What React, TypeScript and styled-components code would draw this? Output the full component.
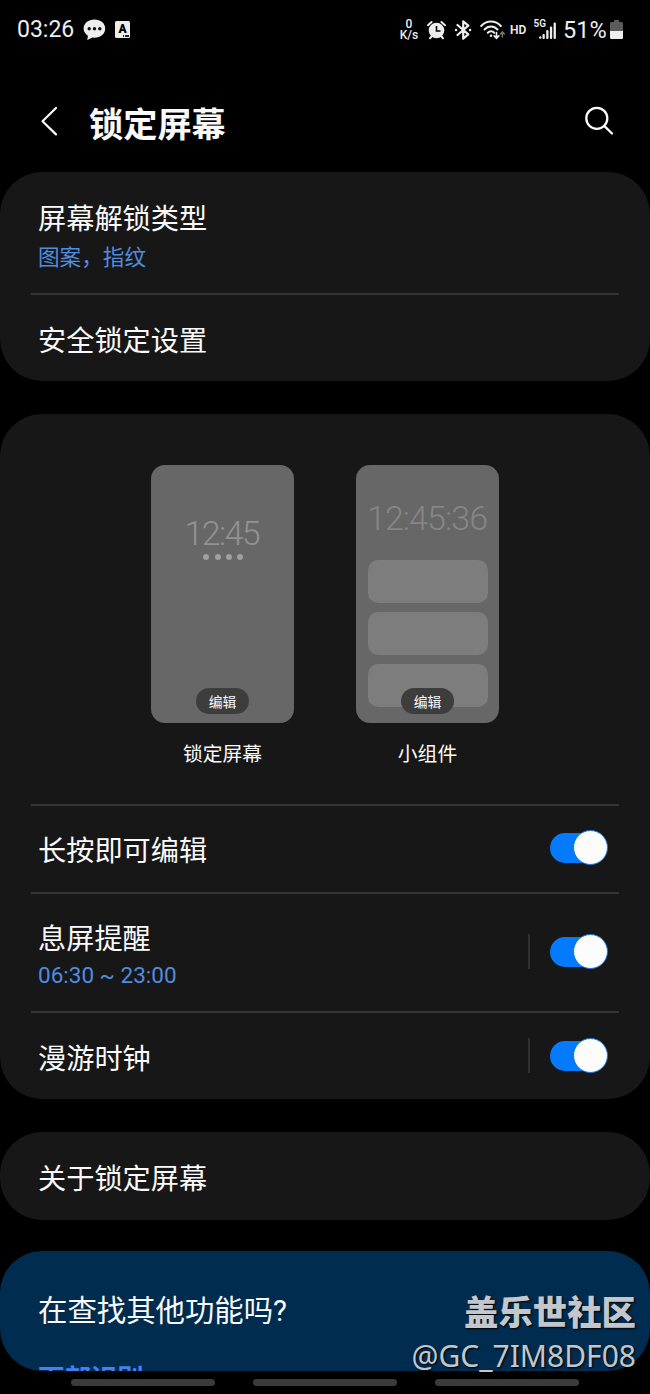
import React from "react";
import styled, { createGlobalStyle } from "styled-components";

const GlobalStyle = createGlobalStyle`
  * { box-sizing: border-box; }
  html, body { margin: 0; padding: 0; background: #000; }
  body { font-family: Roboto, "Noto Sans CJK SC", sans-serif; color: #fafafa; }
`;

const Screen = styled.div`
  position: relative;
  width: 650px;
  height: 1394px;
  overflow: hidden;
  background: #000;
  display: flex;
  flex-direction: column;
`;

const StatusBar = styled.div`
  height: 60px;
  flex: none;
  display: flex;
  justify-content: space-between;
  align-items: center;
  padding: 0 27px 0 17px;
  color: #eee;
`;

const StatusGroup = styled.div`
  display: flex;
  align-items: center;
  svg { display: block; flex: none; }
`;

const StatusText = styled.span<{ $size: number; $weight?: number; $ml?: number; $w?: number }>`
  font-size: ${(p) => p.$size}px;
  font-weight: ${(p) => p.$weight ?? 400};
  margin-left: ${(p) => p.$ml ?? 0}px;
  width: ${(p) => (p.$w ? p.$w + "px" : "auto")};
  line-height: 28px;
  white-space: nowrap;
`;

const Speed = styled.div`
  width: 20px;
  display: flex;
  flex-direction: column;
  align-items: center;
  font-size: 12px;
  line-height: 11.5px;
  font-weight: 500;
  white-space: nowrap;
`;

const IconSlot = styled.span<{ $ml: number }>`
  margin-left: ${(p) => p.$ml}px;
`;

const Header = styled.header`
  height: 112px;
  flex: none;
  display: flex;
  align-items: center;
  padding: 10px 36px 0 40px;
  svg { display: block; flex: none; }
`;

const Title = styled.h1`
  flex: 1;
  margin: 8px 0 0 30px;
  font-size: 34.2px;
  line-height: 44px;
  font-weight: 700;
`;

const Card = styled.section<{ $h: number; $gap?: number; $tone?: "blue" }>`
  flex: none;
  height: ${(p) => p.$h}px;
  margin-bottom: ${(p) => p.$gap ?? 32}px;
  border-radius: 42px;
  background: ${(p) => (p.$tone === "blue" ? "#002c4f" : "#171717")};
  overflow: hidden;
`;

const Row = styled.div<{ $h: number; $pad?: number }>`
  height: ${(p) => p.$h}px;
  padding: ${(p) => p.$pad ?? 5}px 42px 0 38px;
  display: flex;
  align-items: center;
  justify-content: space-between;
`;

const Divider = styled.hr`
  height: 2px;
  margin: 0 31px;
  border: 0;
  background: #353535;
`;

const Labels = styled.div`
  display: flex;
  flex-direction: column;
`;

const Label = styled.div<{ $size?: number }>`
  font-size: ${(p) => p.$size ?? 28.2}px;
  line-height: 38px;
  white-space: nowrap;
`;

const Sub = styled.div<{ $size: number; $lh: number }>`
  font-size: ${(p) => p.$size}px;
  line-height: ${(p) => p.$lh}px;
  color: #4f8de0;
`;

const Previews = styled.div`
  height: 390px;
  padding-top: 51px;
  display: flex;
  justify-content: center;
  gap: 62px;
`;

const Preview = styled.div`
  display: flex;
  flex-direction: column;
  align-items: center;
`;

const Phone = styled.div<{ $top: number }>`
  position: relative;
  width: 143px;
  height: 258px;
  padding-top: ${(p) => p.$top}px;
  border-radius: 14px;
  background: #676767;
  display: flex;
  flex-direction: column;
  align-items: center;
`;

const Clock = styled.div<{ $color: string; $tracking: number }>`
  font-size: 34px;
  line-height: 40px;
  font-weight: 300;
  letter-spacing: ${(p) => p.$tracking}px;
  margin-right: ${(p) => -p.$tracking}px;
  color: ${(p) => p.$color};
  white-space: nowrap;
`;

const Dots = styled.div`
  display: flex;
  gap: 5px;
  margin-top: 1px;
  i { width: 6px; height: 6px; border-radius: 50%; background: #a0a0a0; }
  i:first-child { margin-right: 1px; }
`;

const Widgets = styled.div`
  display: flex;
  flex-direction: column;
  gap: 9px;
  margin-top: 22px;
`;

const Widget = styled.div`
  width: 120px;
  height: 43px;
  border-radius: 10px;
  background: #7d7d7d;
`;

const EditPill = styled.div`
  position: absolute;
  left: 45px;
  bottom: 9px;
  width: 53px;
  height: 26px;
  border-radius: 13px;
  background: #3d3d3d;
  font-size: 13.8px;
  line-height: 28px;
  font-weight: 400;
  text-align: center;
`;

const Caption = styled.div`
  margin-top: 18px;
  font-size: 19.8px;
  line-height: 28px;
`;

const Control = styled.div`
  display: flex;
  align-items: center;
  margin-top: -9px;
`;

const Separator = styled.div`
  width: 1.5px;
  height: 35px;
  margin-right: 20.5px;
  background: #303030;
`;

const Switch = styled.div`
  width: 58px;
  height: 35px;
  display: flex;
  align-items: center;
`;

const Track = styled.div`
  width: 57px;
  height: 30px;
  border-radius: 15px;
  background: #047aff;
  display: flex;
  align-items: center;
  justify-content: flex-end;
`;

const Knob = styled.div`
  flex: none;
  width: 35px;
  height: 35px;
  margin-right: -1px;
  border: 1.5px solid #1273d8;
  border-radius: 50%;
  background: #fcfcfc;
`;

const Suggestion = styled.div`
  padding: 41px 38px 0;
`;

const Link = styled.div`
  margin-top: 31px;
  font-size: 26.4px;
  line-height: 36px;
  font-weight: 700;
  color: #3f82f0;
`;

const NavBar = styled.div`
  position: absolute;
  left: 0;
  right: 0;
  bottom: 0;
  height: 23px;
  padding: 8px 71px 0;
  background: #000;
  display: flex;
  justify-content: space-between;
`;

const NavPill = styled.div`
  width: 144px;
  height: 7px;
  border-radius: 4px;
  background: #3b3b3b;
`;

const Watermark = styled.div`
  position: absolute;
  right: 14px;
  bottom: 17px;
  display: flex;
  flex-direction: column;
  align-items: flex-end;
  color: #c3c7cb;
  text-shadow: 1px 1px 2px #000;
  white-space: nowrap;
`;

const Community = styled.div`
  font-family: "Noto Sans CJK SC", sans-serif;
  font-size: 34.4px;
  line-height: 44px;
  margin-bottom: 3px;
  font-weight: 900;
`;

const UserName = styled.div`
  font-family: "Noto Sans", sans-serif;
  font-size: 30px;
  line-height: 42px;
`;

const ChatIcon = () => (
  <svg width="23" height="23" viewBox="0 0 23 23">
    <path d="M11.500 .5C5.200.5.600 4.400.600 9.500c0 3 1.600 5.600 4.300 7.200L4.300 21l5.200-2.500 2 .2c6.100 0 10.700-4 10.700-9.200S17.600.5 11.500.5Z" fill="#eee" />
    <g fill="#111"><circle cx="6.200" cy="9.700" r="1.700" /><circle cx="11.500" cy="9.700" r="1.700" /><circle cx="16.800" cy="9.700" r="1.700" /></g>
  </svg>
);

const KeyboardBadge = styled.span`
  position: relative;
  width: 15px;
  height: 17px;
  margin: -2px 0 0 9px;
  border-radius: 1.5px;
  background: #eee;
  color: #000;
  font-size: 12px;
  line-height: 16px;
  font-weight: 900;
  text-align: center;
  &::after {
    content: "";
    position: absolute;
    right: 1px;
    bottom: 1px;
    width: 6px;
    height: 1.5px;
    background: repeating-linear-gradient(90deg, #222 0 1.5px, #eee 1.5px 2.2px);
  }
`;

const AlarmIcon = () => (
  <svg width="19" height="20" viewBox="0 0 19 20">
    <circle cx="9.500" cy="10.500" r="7.800" fill="#eee" />
    <path d="M1 5.200 4.600 2M18 5.200 14.400 2M4.500 16.500 3 18.300M14.500 16.500 16 18.300" stroke="#eee" strokeWidth="2" strokeLinecap="round" />
    <path d="M9.500 6v5h4" stroke="#000" strokeWidth="1.600" fill="none" />
  </svg>
);

const BluetoothIcon = () => (
  <svg width="18" height="20" viewBox="0 0 18 20" fill="none" stroke="#eee" strokeWidth="2.200" strokeLinecap="round" strokeLinejoin="round">
    <path d="M3.500 5 14.300 14.300 9.200 18.700V1.300L14.300 5.700 3.500 15" />
    <path d="M2 10h.1M16 10h.1" strokeWidth="2.400" />
  </svg>
);

const WifiIcon = () => (
  <svg width="25" height="20" viewBox="0 0 25 20" fill="none" stroke="#eee" strokeWidth="2" strokeLinecap="round">
    <path d="M1.200 6C6.500.1 15.500.1 20.800 6" />
    <path d="M4.500 9.500c3.500-4 9.500-4 13 0" />
    <path d="M7.800 12.700c1.800-1.800 4.600-1.800 6.400 0" />
    <circle cx="11" cy="15.700" r="1.200" fill="#eee" stroke="none" />
    <path d="M16.500 12.500v5.500m-2.300-2.200 2.300 2.400 2.300-2.400" strokeWidth="1.700" />
    <path d="M22.400 17v-5m-1.900 1.900 1.900-2 1.900 2" stroke="#777" strokeWidth="1.500" />
  </svg>
);

const SignalIcon = () => (
  <svg width="23" height="22" viewBox="0 0 23 22" fill="#eee">
    <text x="-.5" y="8" fontFamily="Roboto, sans-serif" fontSize="10" fontWeight="600">5G</text>
    <circle cx="6.300" cy="18.500" r="1.200" />
    <rect x="8.500" y="15" width="2.300" height="5" rx="1" />
    <rect x="12.200" y="11" width="2.300" height="9" rx="1" />
    <rect x="15.900" y="7.500" width="2.300" height="12.500" rx="1" />
    <rect x="19.600" y="3.500" width="2.300" height="16.500" rx="1" />
  </svg>
);

const BatteryIcon = () => (
  <svg width="13" height="20" viewBox="0 0 13 20">
    <path d="M4 0h5v2h2.500Q13 2 13 3.500V11H0V3.500Q0 2 1.500 2H4Z" fill="#5b5b5b" />
    <path d="M0 11h13v6.500q0 1.500-1.500 1.500h-10Q0 19 0 17.500Z" fill="#eee" />
  </svg>
);

const BackIcon = () => (
  <svg width="19" height="30" viewBox="0 0 19 30" fill="none" stroke="#fafafa" strokeWidth="2.200" strokeLinecap="round" strokeLinejoin="round">
    <path d="M16 2 2.500 15.200 16 28.400" />
  </svg>
);

const SearchIcon = () => (
  <svg width="30" height="30" viewBox="0 0 30 30" fill="none" stroke="#fafafa" strokeWidth="2.300" strokeLinecap="round">
    <circle cx="12.800" cy="12.300" r="10.500" />
    <path d="m20.200 19.900 7.800 7.600" />
  </svg>
);

const Toggle = ({ separated = false }: { separated?: boolean }) => (
  <Control>
    {separated && <Separator />}
    <Switch role="switch" aria-checked="true">
      <Track><Knob /></Track>
    </Switch>
  </Control>
);

export default function App() {
  return (
    <>
      <GlobalStyle />
      <Screen>
        <StatusBar>
          <StatusGroup>
            <StatusText $size={23} $w={66}>03:26</StatusText>
            <ChatIcon />
            <KeyboardBadge>A</KeyboardBadge>
          </StatusGroup>
          <StatusGroup>
            <Speed><span>0</span><span>K/s</span></Speed>
            <IconSlot $ml={8}><AlarmIcon /></IconSlot>
            <IconSlot $ml={8}><BluetoothIcon /></IconSlot>
            <IconSlot $ml={8}><WifiIcon /></IconSlot>
            <StatusText $size={12} $weight={600} $ml={5} $w={17}>HD</StatusText>
            <IconSlot $ml={7}><SignalIcon /></IconSlot>
            <StatusText $size={23.5} $ml={6} $w={43}>51%</StatusText>
            <IconSlot $ml={4}><BatteryIcon /></IconSlot>
          </StatusGroup>
        </StatusBar>

        <Header>
          <BackIcon />
          <Title>锁定屏幕</Title>
          <SearchIcon />
        </Header>

        <Card $h={209} $gap={33}>
          <Row $h={121} $pad={12}>
            <Labels>
              <Label>屏幕解锁类型</Label>
              <Sub $size={21.6} $lh={38}>图案，指纹</Sub>
            </Labels>
          </Row>
          <Divider />
          <Row $h={86} $pad={8}><Label>安全锁定设置</Label></Row>
        </Card>

        <Card $h={685} $gap={33}>
          <Previews>
            <Preview>
              <Phone $top={48}>
                <Clock $color="#929292" $tracking={-1.6}>12:45</Clock>
                <Dots><i /><i /><i /><i /></Dots>
                <EditPill>编辑</EditPill>
              </Phone>
              <Caption>锁定屏幕</Caption>
            </Preview>
            <Preview>
              <Phone $top={33}>
                <Clock $color="#868686" $tracking={-0.9}>12:45:36</Clock>
                <Widgets><Widget /><Widget /><Widget /></Widgets>
                <EditPill>编辑</EditPill>
              </Phone>
              <Caption>小组件</Caption>
            </Preview>
          </Previews>
          <Divider />
          <Row $h={86} $pad={6}><Label>长按即可编辑</Label><Toggle /></Row>
          <Divider />
          <Row $h={117} $pad={7}>
            <Labels>
              <Label>息屏提醒</Label>
              <Sub $size={22.5} $lh={32}>06:30 ~ 23:00</Sub>
            </Labels>
            <Toggle separated />
          </Row>
          <Divider />
          <Row $h={86} $pad={8}><Label>漫游时钟</Label><Toggle separated /></Row>
        </Card>

        <Card $h={88} $gap={31}>
          <Row $h={88} $pad={8}><Label>关于锁定屏幕</Label></Row>
        </Card>

        <Card $h={120} $tone="blue">
          <Suggestion>
            <Label $size={29.4}>在查找其他功能吗?</Label>
            <Link>面部识别</Link>
          </Suggestion>
        </Card>

        <NavBar><NavPill /><NavPill /><NavPill /></NavBar>
        <Watermark>
          <Community>盖乐世社区</Community>
          <UserName>@GC_7IM8DF08</UserName>
        </Watermark>
      </Screen>
    </>
  );
}
